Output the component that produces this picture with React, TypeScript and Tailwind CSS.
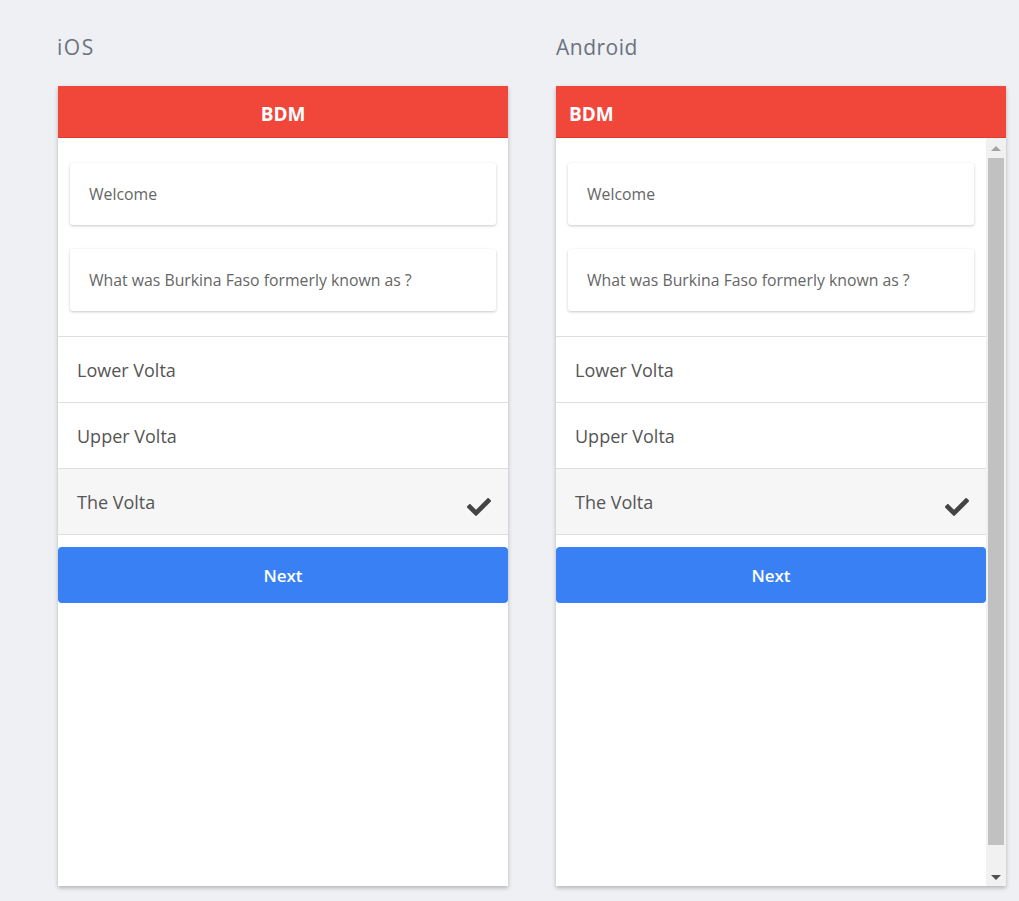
import React from "react";
import { FaCheck } from "react-icons/fa";

const font = { fontFamily: '"Open Sans", "Noto Sans", sans-serif' };

function Content() {
  const options = ["Lower Volta", "Upper Volta", "The Volta"];
  return (
    <div className="flex flex-col flex-1 min-w-0 bg-white">
      <div className="flex flex-col gap-[24px] px-[12px] pt-[25px] pb-[25px]">
        <div className="h-[62px] flex items-center pl-[19px] pt-[2px] bg-white rounded-[3px] shadow-[0_1px_3px_rgba(0,0,0,0.22)] text-[15.8px] text-[#666]">
          Welcome
        </div>
        <div className="h-[62px] flex items-center pl-[19px] pt-[2px] bg-white rounded-[3px] shadow-[0_1px_3px_rgba(0,0,0,0.22)] text-[15.8px] text-[#666]">
          What was Burkina Faso formerly known as ?
        </div>
      </div>
      <div className="flex flex-col border-t border-[#dedede]">
        {options.map((o, i) => (
          <div
            key={o}
            className={
              "h-[66px] flex items-center justify-between pl-[19px] pr-[17px] pt-[1px] border-b border-[#dedede] text-[18px] text-[#555] " +
              (i === 2 ? "bg-[#f6f6f6]" : "bg-white")
            }
          >
            <span>{o}</span>
            {i === 2 && <FaCheck className="text-[#444] w-[24px] h-[24px] mt-[10px]" />}
          </div>
        ))}
      </div>
      <div className="pt-[12px]">
        <div className="h-[56px] rounded-[4px] bg-[#3880f4] flex items-center justify-center text-white text-[17px] font-semibold pt-[2px]">
          Next
        </div>
      </div>
      <div className="flex-1" />
    </div>
  );
}

function Scrollbar() {
  return (
    <div className="w-[20px] bg-[#f1f1f1] flex flex-col items-center">
      <div className="h-[20px] flex items-center justify-center">
        <div className="w-0 h-0 border-l-[5px] border-r-[5px] border-b-[5px] border-l-transparent border-r-transparent border-b-[#a3a3a3]" />
      </div>
      <div className="w-[16px] flex-1 bg-[#c1c1c1]" />
      <div className="h-[41px] flex items-end justify-center pb-[6px]">
        <div className="w-0 h-0 border-l-[5px] border-r-[5px] border-t-[5px] border-l-transparent border-r-transparent border-t-[#505050]" />
      </div>
    </div>
  );
}

function Panel({ android }: { android?: boolean }) {
  return (
    <div className="w-[450px] h-[800px] flex flex-col bg-white shadow-[0_2px_4px_rgba(0,0,0,0.25)]">
      <div
        className={
          "h-[52px] bg-[#f1473b] flex items-center text-white text-[19px] font-bold border-b border-[#e0392d] pt-[5px] " +
          (android ? "pl-[13px]" : "justify-center")
        }
      >
        BDM
      </div>
      <div className="flex flex-1 min-h-0">
        <Content />
        {android && <Scrollbar />}
      </div>
    </div>
  );
}

export default function App() {
  return (
    <div className="min-h-[901px] bg-[#eef0f4] flex gap-[48px] pl-[58px] pt-[34px]" style={font}>
      <div className="flex flex-col">
        <div className="h-[26px] mb-[26px] text-[21px] leading-[26px] text-[#6b7280] tracking-[1.5px] -ml-[1px]">iOS</div>
        <Panel />
      </div>
      <div className="flex flex-col">
        <div className="h-[26px] mb-[26px] text-[21px] leading-[26px] text-[#6b7280] tracking-[0.5px]">Android</div>
        <Panel android />
      </div>
    </div>
  );
}
